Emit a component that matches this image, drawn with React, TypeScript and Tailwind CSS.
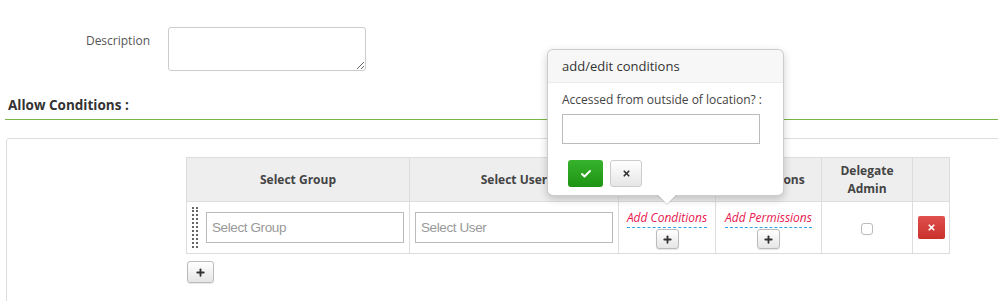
import { Check, X, Plus } from "lucide-react"

const font = { fontFamily: '"Open Sans", "Liberation Sans", sans-serif' }
const inputFont = { fontFamily: '"Liberation Sans", Arial, sans-serif' }

function PlusButton() {
  return (
    <button className="flex h-[20px] w-[23px] items-center justify-center rounded-[3px] border border-[#bbb] bg-gradient-to-b from-white to-[#e6e6e6] shadow-[0_1px_1px_rgba(0,0,0,0.1)]">
      <Plus size={11} strokeWidth={4} className="text-[#333]" />
    </button>
  )
}

export default function App() {
  return (
    <div className="relative h-[301px] w-[998px] overflow-hidden bg-white text-[#555]" style={font}>

      <div className="flex pt-[27px]">
        <label className="w-[150px] pt-[5px] text-right text-[12px]">Description</label>
        <textarea className="ml-[18px] h-[44px] w-[198px] rounded-[3px] border border-[#ccc]" />
      </div>

      <div className="ml-[5px] mt-[24px] pb-[4px] pl-[3px]">
        <h3 className="text-[13.5px] font-bold leading-[20px] text-[#333]">Allow Conditions :</h3>
      </div>
      <div className="ml-[5px] h-px bg-[#7ab547]" />

      <div className="ml-[6px] mt-[18px] h-[300px] w-[1100px] rounded-tl-[3px] border border-[#ddd] pl-[179px] pt-[18px]">
        <table className="border-collapse text-[12px]">
          <thead>
            <tr className="h-[44px] bg-[#eee] font-bold leading-[18px] text-[#444]">
              <th className="w-[222px] border border-[#ddd]">Select Group</th>
              <th className="w-[209px] border border-[#ddd]">Select User</th>
              <th className="w-[97px] border border-[#ddd]">Conditions</th>
              <th className="w-[106px] border border-[#ddd]">Permissions</th>
              <th className="w-[91px] border border-[#ddd]">Delegate<br />Admin</th>
              <th className="w-[37px] border border-[#ddd]"></th>
            </tr>
          </thead>
          <tbody>
            <tr className="h-[52px]">
              <td className="border border-[#ddd] px-[5px]">
                <div className="flex items-center">
                  <div className="h-[41px] w-[6px] border-x-2 border-dotted border-[#666]" />
                  <input
                    placeholder="Select Group"
                    className="ml-[8px] h-[31px] w-[198px] border border-[#bbb] px-[5px] text-[13.5px] tracking-[-0.4px] placeholder:text-[#999]"
                    style={inputFont}
                  />
                </div>
              </td>
              <td className="border border-[#ddd] px-[5px]">
                <input
                  placeholder="Select User"
                  className="h-[31px] w-[198px] border border-[#bbb] px-[5px] text-[13.5px] tracking-[-0.4px] placeholder:text-[#999]"
                  style={inputFont}
                />
              </td>
              <td className="border border-[#ddd] pt-[3px]">
                <div className="flex flex-col items-center">
                  <span className="whitespace-nowrap border-b border-dashed border-[#2fa4e7] italic leading-[18px] text-[#e8174f]">Add Conditions</span>
                  <div className="mt-[1px]"><PlusButton /></div>
                </div>
              </td>
              <td className="border border-[#ddd] pt-[3px]">
                <div className="flex flex-col items-center">
                  <span className="whitespace-nowrap border-b border-dashed border-[#2fa4e7] italic leading-[18px] text-[#e8174f]">Add Permissions</span>
                  <div className="mt-[1px]"><PlusButton /></div>
                </div>
              </td>
              <td className="border border-[#ddd]">
                <div className="flex justify-center pt-[3px]">
                  <div className="h-[12px] w-[12px] rounded-[3px] border border-[#bbb] bg-white" />
                </div>
              </td>
              <td className="border border-[#ddd]">
                <div className="flex justify-center">
                  <button className="flex h-[23px] w-[27px] items-center justify-center rounded-[2px] bg-gradient-to-b from-[#e0504c] to-[#c9302c]">
                    <X size={9} strokeWidth={4.5} className="text-white" />
                  </button>
                </div>
              </td>
            </tr>
          </tbody>
        </table>
        <div className="ml-[1px] mt-[7px]">
          <button className="flex h-[22px] w-[27px] items-center justify-center rounded-[3px] border border-[#bbb] bg-gradient-to-b from-white to-[#e6e6e6] shadow-[0_1px_1px_rgba(0,0,0,0.1)]">
            <Plus size={11} strokeWidth={4} className="text-[#333]" />
          </button>
        </div>
      </div>

      <div className="absolute left-[547px] top-[49px] w-[237px] rounded-[6px] border border-[rgba(0,0,0,0.2)] bg-white shadow-[0_3px_8px_rgba(0,0,0,0.2)]">
        <div className="h-[33px] rounded-t-[6px] border-b border-[#ebebeb] bg-[#f7f7f7] pl-[14px] text-[13px] leading-[32px] text-[#333]">
          add/edit conditions
        </div>
        <div className="px-[14px] pb-[8px] pt-[8px]">
          <div className="whitespace-nowrap text-[12px] leading-[18px] text-[#444]">Accessed from outside of location? :</div>
          <input className="mt-[5px] h-[30px] w-[198px] border border-[#bbb]" />
          <div className="mt-[16px] flex gap-[7px] pl-[6px]">
            <button className="flex h-[27px] w-[35px] items-center justify-center rounded-[3px] bg-gradient-to-b from-[#37b22c] to-[#1d9413]">
              <Check size={12} strokeWidth={4} className="text-white" />
            </button>
            <button className="flex h-[27px] w-[32px] items-center justify-center rounded-[3px] border border-[#ccc] bg-gradient-to-b from-white to-[#e6e6e6]">
              <X size={9} strokeWidth={4.5} className="text-[#333]" />
            </button>
          </div>
        </div>
        <div className="absolute bottom-[-10px] left-[109px] h-0 w-0 border-x-[10px] border-t-[10px] border-x-transparent border-t-[rgba(0,0,0,0.15)]" />
        <div className="absolute bottom-[-9px] left-[110px] h-0 w-0 border-x-[9px] border-t-[9px] border-x-transparent border-t-white" />
      </div>

    </div>
  )
}
